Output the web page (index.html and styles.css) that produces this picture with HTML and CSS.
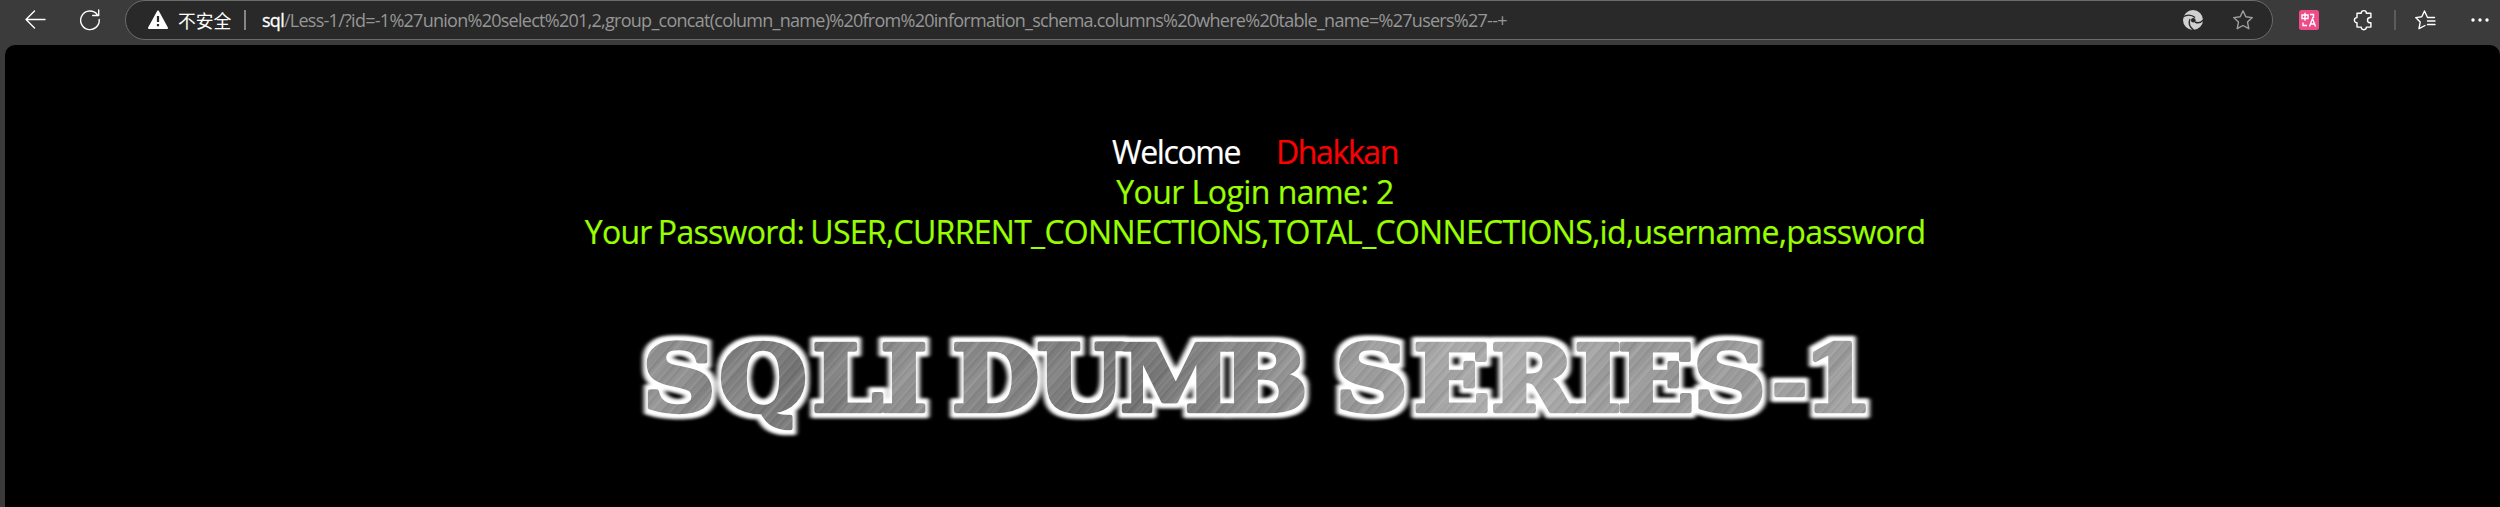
FILE: index.html
```html
<!DOCTYPE html>
<html lang="zh-CN">
<head>
<meta charset="utf-8">
<title>Less-1</title>
<link rel="stylesheet" href="styles.css">
</head>
<body>
<header class="toolbar">
  <svg class="icon back" viewBox="0 0 20 20"><path d="M20 9.5H1M9.5 1 1 9.5 9.5 18"/></svg>
  <svg class="icon reload" viewBox="0 0 20 20"><path d="M17.2 4.5A9.3 9.3 0 1 0 19.2 9.5M18.7 0v5.5h-6"/></svg>
  <div class="address">
    <svg class="warn" viewBox="0 0 20 20"><path d="M10 1.5 19 18H1Z" fill="#fff" stroke="#fff" stroke-width="2" stroke-linejoin="round"/><path d="M10 6v6M10 14v2.200" stroke="#292929" stroke-width="2.200"/></svg>
    <span class="insecure">不安全</span>
    <i class="divider light"></i>
    <span class="url"><b class="host">sql</b>/Less-1/?id=-1%27union%20select%201,2,group_concat(column_name)%20from%20information_schema.columns%20where%20table_name=%27users%27--+</span>
    <svg class="swirl" viewBox="0 0 20 20"><circle cx="10" cy="10" r="10" fill="#d0d0d0"/><g fill="none" stroke="#292929" stroke-width="1.400"><path d="M-.5 7C4 4.500 8.500 4.500 12 7.500"/><path d="M7 9C5 13.500 7 17.500 11 20.500"/><path d="M12 12c3 1.500 6 .5 8.300-2" /></g><circle cx="10.300" cy="10.200" r="2.300" fill="#292929"/></svg>
    <svg class="icon star" viewBox="0 0 20 20"><path d="m10 .8 2.800 6 6.500.8-4.800 4.500 1.300 6.600L10 15.500l-5.800 3.200 1.300-6.600L.7 7.600l6.500-.8Z"/></svg>
  </div>
  <svg class="translate" viewBox="0 0 20 20"><rect width="20" height="20" rx="2.500" fill="#ee4b88"/><g fill="none" stroke="#fff" stroke-width="1.400"><path d="M3 5h6v3.500H3ZM6 2.800v8M11 4.500h3.500V8M4 12.500v3h4M10.500 16.500l3-8 3 8M11.500 14h4"/></g></svg>
  <svg class="icon puzzle" viewBox="0 0 20 20"><path d="M3 3.200h4.200a2.600 2.600 0 0 1 5.200 0h4.500v4.300h-1.200a2.700 2.700 0 0 0 0 5.300h1.200v4.300h-4.500a2.600 2.600 0 0 1-5.200 0H3v-4.300a2.600 2.600 0 0 1 0-5.200Z"/></svg>
  <i class="divider"></i>
  <svg class="icon favs" viewBox="0 0 20 20"><path d="M19.500 7.500h-7L9.500 1 6.800 6.800.7 7.600l4.500 4.500L4 18.700l6-3.200M12.500 11h7.500M12.500 14.500h7.500"/></svg>
  <svg class="dots" viewBox="0 0 18 4"><circle cx="2" cy="2" r="1.700"/><circle cx="9" cy="2" r="1.700"/><circle cx="16" cy="2" r="1.700"/></svg>
</header>
<main class="page">
  <div class="welcome"><span>Welcome</span><span class="name">Dhakkan</span></div>
  <div class="result login">Your Login name: 2</div>
  <div class="result password">Your Password: USER,CURRENT_CONNECTIONS,TOTAL_CONNECTIONS,id,username,password</div>
  <svg class="banner" viewBox="632 320 1250 130">
    <defs>
      <linearGradient id="metal" gradientUnits="userSpaceOnUse" x1="580" y1="340" x2="1700" y2="420">
        <stop offset="0" stop-color="#999"/><stop offset=".13" stop-color="#767676"/><stop offset=".22" stop-color="#929292"/><stop offset=".4" stop-color="#757575"/><stop offset=".55" stop-color="#969696"/><stop offset=".7" stop-color="#b0b0b0"/><stop offset=".83" stop-color="#999"/><stop offset="1" stop-color="#a2a2a2"/>
      </linearGradient>
      <linearGradient id="scratch" gradientUnits="userSpaceOnUse" spreadMethod="repeat" x1="0" y1="0" x2="11" y2="8.800">
        <stop offset="0" stop-color="#fff" stop-opacity="0"/><stop offset=".15" stop-color="#fff" stop-opacity=".09"/><stop offset=".25" stop-color="#000" stop-opacity=".05"/><stop offset=".5" stop-color="#fff" stop-opacity=".03"/><stop offset=".6" stop-color="#fff" stop-opacity=".08"/><stop offset=".7" stop-color="#000" stop-opacity=".06"/><stop offset="1" stop-color="#fff" stop-opacity="0"/>
      </linearGradient>
      <linearGradient id="streak" gradientUnits="userSpaceOnUse" spreadMethod="repeat" x1="0" y1="0" x2="41" y2="32.800">
        <stop offset="0" stop-color="#000" stop-opacity="0"/><stop offset=".2" stop-color="#000" stop-opacity=".07"/><stop offset=".35" stop-color="#fff" stop-opacity=".08"/><stop offset=".4" stop-color="#000" stop-opacity=".03"/><stop offset=".75" stop-color="#fff" stop-opacity=".08"/><stop offset="1" stop-color="#000" stop-opacity="0"/>
      </linearGradient>
      <pattern id="brushed" patternUnits="userSpaceOnUse" x="560" y="310" width="1200" height="150" viewBox="560 310 1200 150">
        <rect x="560" y="310" width="1200" height="150" fill="url(#metal)"/>
        <rect x="560" y="310" width="1200" height="150" fill="url(#scratch)"/>
        <rect x="560" y="310" width="1200" height="150" fill="url(#streak)"/>
      </pattern>
      <filter id="glow" filterUnits="userSpaceOnUse" x="560" y="310" width="1200" height="150">
        <feMorphology in="SourceAlpha" operator="dilate" radius="4 5" result="wide"/>
        <feGaussianBlur in="wide" stdDeviation="1.700" result="soft"/>
        <feFlood flood-color="#fff"/><feComposite in2="soft" operator="in" result="halo"/>
        <feMerge><feMergeNode in="halo"/><feMergeNode in="SourceGraphic"/></feMerge>
      </filter>
    </defs>
    <g transform="scale(1.1 1)" filter="url(#glow)">
      <text class="metal" y="411.500" x="586 655.500 740 802 836.500 867 944 1020 1113 1192 1215.500 1286.500 1357 1433 1472 1541 1613 1641">SQLI DUMB SERIES<tspan class="dash">-</tspan>1</text>
    </g>
  </svg>
</main>
</body>
</html>
```
FILE: styles.css
```css
* { box-sizing: border-box; }
body { margin: 0; width: 2500px; height: 507px; overflow: hidden; background: #3b3b3b; font-family: "Open Sans", "Noto Sans CJK SC", sans-serif; }
.toolbar { display: flex; align-items: center; height: 45px; padding: 0 12px 6px 25px; }
.toolbar svg { display: block; flex: none; width: 20px; height: 20px; overflow: visible; }
.icon { fill: none; stroke: #fff; stroke-width: 1.4; stroke-linejoin: round; stroke-linecap: round; }
.reload { margin-left: 35px; }
.address { display: flex; flex: none; align-items: center; width: 2148px; height: 40px; margin-left: 25px; padding: 0 19px 0 22px; border: 1.5px solid #6b6b6b; border-radius: 20px; background: #292929; }
.insecure { margin-left: 10px; width: 54px; color: #fff; font: 17.8px/24px "Noto Sans CJK SC", sans-serif; white-space: nowrap; }
.divider { flex: none; width: 2px; height: 20px; background: #5c5c5c; }
.light { margin-left: 12px; background: #858585; }
.url { flex: 1; margin-left: 16px; color: #969696; font-size: 18px; line-height: 24px; letter-spacing: -.73px; white-space: nowrap; }
.host { color: #fff; font-weight: 400; -webkit-text-stroke: .3px #fff; }
.toolbar .star { margin-left: 30px; stroke: #a0a0a0; }
.translate { margin-left: 26px; }
.puzzle { margin-left: 35px; }
.toolbar .divider:not(.light) { margin-left: 20px; }
.favs { margin-left: 19px; }
.toolbar .dots { width: 18px; height: 4px; margin-left: 36px; fill: #fff; }
.page { display: flex; flex-direction: column; align-items: center; height: 462px; margin-left: 5px; padding: 87px 0 0 5px; border-radius: 10px 10px 0 0; background: #000; font-size: 32px; line-height: 40px; white-space: nowrap; -webkit-text-stroke: .2px currentColor; }
.welcome { display: flex; gap: 36px; color: #fff; letter-spacing: -1.4px; }
.name { color: #f00; }
.result { color: #9f0; }
.login { letter-spacing: -.55px; }
.password { letter-spacing: -.7px; word-spacing: -1.5px; }
.banner { display: block; width: 1250px; height: 130px; margin-top: 68px; }
.metal { font: bold 92px "DejaVu Serif", serif; fill: url(#brushed); stroke: url(#brushed); stroke-width: 4.5px; stroke-linejoin: round; }
.dash { font-size: 76px; }
```
